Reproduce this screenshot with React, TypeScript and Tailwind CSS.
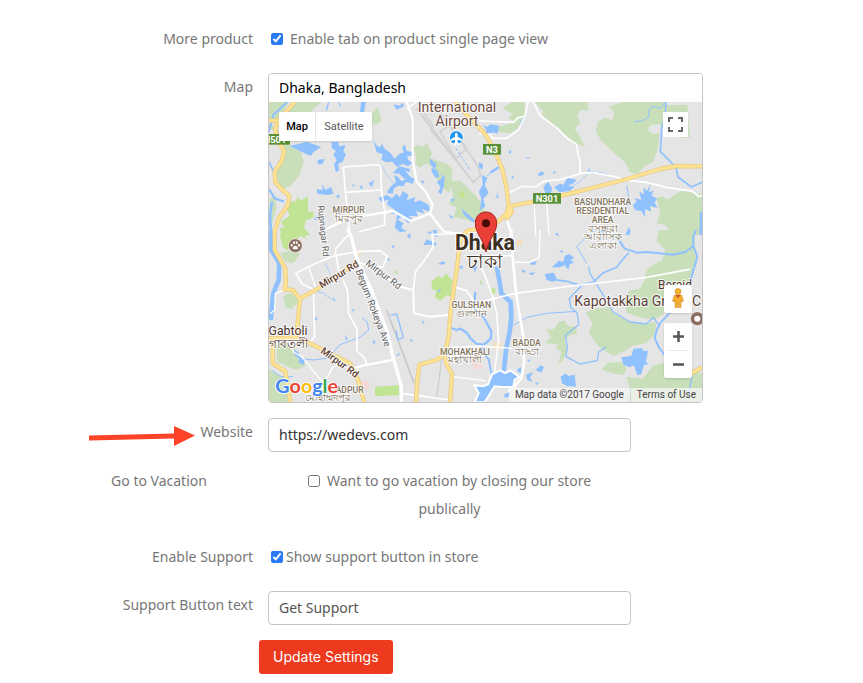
import { useState } from 'react';
import type { ReactNode } from 'react';

type MapLabel = {
  x: number;
  y: number;
  size: number;
  text: string;
  color?: string;
  weight?: number;
  rotate?: number;
  anchor?: 'start' | 'middle' | 'end';
};

const LAND = '#e5e5e5';
const GREEN = '#c9dfba';
const PARK = '#c0e394';
const WATER = '#90c1ff';

// the map is drawn in four tiles on a 3x grid
const TILES = ['translate(0 0)', 'translate(660 0)', 'translate(0 495)', 'translate(660 495)'];

const GREENS = [
  [
    'M27 111H86L58 160L27 168Z',
    'M96 111H186L166 126L150 145H80Z',
    'M27 170L58 200L84 240L124 262L131 290L118 332L92 362L68 372L50 350L48 320L74 280L70 240L52 200L27 190Z',
    'M330 158L350 126L358 140L365 166L348 180L336 172Z',
    'M458 250L474 240L486 246L500 236L516 262L512 280L560 296L578 312L574 340L582 352L566 384L548 366L530 340L518 302L496 296L480 308L466 296L470 276Z',
    'M570 350L602 346L626 372L650 395L664 418L676 440L672 478L640 470L580 456L590 428L566 416L580 392Z',
    'M30 400L44 396L50 428L38 470H27Z',
  ],
  [
    'M60 115L70 126L96 111H132L138 150L122 182L92 205L60 202L46 192L62 184L78 180L102 168L84 160L98 148L76 134Z',
    'M165 111H322L326 138L304 134L292 152L302 176L284 190L300 216L314 244L290 236L250 206L206 166L186 150L190 138Z',
    'M388 124L430 111H556L560 160L548 190L536 176L510 182L502 196L522 208L538 204L534 250L520 290L496 302L472 326L450 322L436 292L400 262L364 228L348 200L352 170L376 158L398 166L402 142Z',
    'M560 120H622L630 216L604 220L584 204L562 210Z',
    'M530 400L548 394L562 404L588 386L604 378L666 386V510H600L572 502L556 480L530 474L540 446Z',
  ],
  [
    'M60 70L110 60L120 72L100 100L76 96Z',
    'M70 200L84 190L100 192L118 214L94 238L76 230Z',
    'M48 348L78 336L104 352L116 388L140 404L110 420L84 410L52 396Z',
    'M27 420L70 440L86 520H27Z',
    'M400 130L408 118L416 132Z',
  ],
  [
    'M536 0H644V56L650 100L630 160L606 208L560 244L522 270L478 262L440 248L434 216L446 182L480 176L494 150L500 118L526 100L546 92L556 60L530 34Z',
    'M318 248L340 236L388 232L400 250L440 270L486 282L530 276L522 316L498 340L456 348L430 366L400 378L372 362L348 340L326 306L338 280Z',
    'M226 292L238 274L254 272L264 288L290 290L290 312L270 316L254 332L262 356L250 390L234 404L244 366L226 352L238 342L196 340L212 320L198 296L216 300Z',
    'M364 418L384 398L424 396L440 414L430 436L396 430Z',
    'M428 520L450 484L440 440L488 446L518 408L552 398L580 410L666 430V520Z',
    'M0 150L8 154L4 166L0 164Z',
  ],
];

const PARKS = [
  [
    'M90 410L108 408L112 396L122 408L144 394L144 440L162 440L160 458L138 466L132 488L150 510H66L58 490L74 488L62 470L90 452L80 432Z',
    'M596 384L610 376L616 394L604 402Z',
  ],
  [],
  [
    'M66 0H140L136 24L118 18L112 36L100 26L84 62L68 50L60 20Z',
    'M516 152L534 138L548 144L558 130L578 152L572 182L582 200L560 196L540 214L524 200L530 182L514 178Z',
    'M345 470L416 466L418 496L345 498Z',
  ],
  ['M30 178L46 174L46 190L30 192Z', 'M-8 -2L20 0L12 6Z'],
];

const PONDS = [
  [
    'M88 242L120 236L140 230L184 246L160 262L152 273L124 260Z',
    'M204 111H208L202 136H197Z',
    'M303 111H318L312 142H300Z',
    'M214 232L234 230L238 244L256 240L250 262L258 266L248 290L234 296L238 316L228 322L222 298L230 286L220 268L228 258L216 250Z',
    'M174 284L194 282L188 296L172 298Z',
    'M170 372L188 376L186 358L196 374L214 366L220 386L202 390L172 386Z',
    'M226 395L236 388L240 400Z',
    'M340 226L352 244L362 246L366 234L372 250L392 264L404 282L416 268L432 262L426 250L434 238L440 258L462 262L460 274L442 272L444 284L458 294L444 304L428 296L412 306L396 290L378 292L364 284L368 268L350 262Z',
    'M418 304L450 312L448 322L434 316L452 336L464 342L458 356L438 350L430 364L416 362L402 370L398 386L380 384L390 366L408 352L402 330L414 336L424 348L436 344L418 326L398 324Z',
    'M356 398L380 390L396 400L408 386L420 396L428 378L446 390L440 406L466 396L462 412L480 406L506 420L510 440L486 432L494 446L468 438L474 454L446 452L462 466L444 474L426 456L408 466L412 448L388 444L404 434L380 418L386 404L362 410Z',
    'M410 462L430 474L424 490L442 498L420 502L404 488Z',
    'M508 280L530 296L524 312L512 300Z',
    'M514 308L532 316L538 336L526 338L516 322Z',
    'M530 352L546 340L544 328L554 336L552 362L544 388L534 382L542 366Z',
    'M326 356L342 344L336 366Z',
    'M298 360L310 366L304 374Z',
    'M276 358L286 360L280 366Z',
    'M484 344L494 350L486 356Z',
    'M566 448L580 456L574 462Z',
    'M160 466L172 450L176 462Z',
    'M604 430L630 452L650 472L636 470L612 450Z',
    'M400 118L420 122L428 112L432 124L410 134Z',
    'M570 404L584 398L580 412Z',
    'M500 504L512 498L516 508Z',
  ],
  [
    'M8 180L22 186L30 178L58 182L52 206L36 202L20 212L10 206L20 196Z',
    'M118 180L128 158L134 160L124 184Z',
    'M6 330L22 338L14 360L26 384L10 402L16 424L0 436L4 400L-4 380L8 360Z',
    'M28 320L54 304L56 312L36 324Z',
    'M190 366L204 350L216 370L212 388L196 384Z',
    'M222 366L240 356L250 360L262 338L290 344L282 354L264 362L284 366L268 378L238 382Z',
    'M172 328L186 318L194 328L180 334Z',
    'M84 262L94 254L92 266Z',
    'M136 278L150 276L144 282Z',
    'M92 338L104 330L98 342Z',
    'M218 322L228 318L224 328Z',
    'M322 318L330 308L328 318L344 320L338 328Z',
    'M458 420L470 410L464 400L484 404L478 380L492 388L490 366L500 378L512 358L506 382L522 376L514 392L532 400L524 412L532 430L510 422L514 440L496 432L494 456L484 438L466 436Z',
    'M438 410L446 394L450 412L442 428Z',
    'M50 380L56 398L50 400Z',
    'M34 450L42 470L32 476L24 462Z',
    'M436 510L446 486L452 498L448 510Z',
    'M660 440H666V510H658Z',
    'M-2 290L10 300L6 314L-4 306Z',
  ],
  [
    'M440 18L452 8L450 26Z',
    'M394 48L406 46L398 56Z',
    'M490 46L500 28L530 40L528 46L500 44Z',
    'M518 0H530L532 22L522 16Z',
    'M534 102L548 94L558 98L546 104Z',
    'M530 184L542 176L540 186Z',
    'M160 258L174 266L166 272Z',
    'M218 200L228 214L220 212Z',
    'M256 316L264 328L256 330Z',
    'M276 236L284 240L278 246Z',
    'M336 336L346 330L344 344Z',
    'M380 90L386 84L392 92Z',
    'M486 270L494 278L488 282Z',
    'M408 376L420 368L416 378Z',
    'M448 332L458 326L456 336Z',
    'M330 208L338 204L340 212Z',
    'M102 360L116 366L124 386L134 390L132 404L116 398L118 386L104 376Z',
    'M596 112L610 106L606 118Z',
    'M634 104L652 110L644 126Z',
  ],
  [
    'M150 98L170 94L166 104L152 104Z',
    'M124 118L138 122L130 130Z',
    'M144 130L166 126L158 136Z',
    'M194 132L222 128L230 146L220 156L200 150Z',
    'M216 112L236 92L250 96L254 78L266 72L282 82L272 92L284 96L268 104L266 120L254 106L240 112Z',
    'M238 66L248 60L250 68Z',
    'M224 12L234 8L236 18Z',
    'M424 382L454 378L460 356L486 354L488 362L504 362L498 394L504 404L492 404L484 432L472 436L462 406L448 412L430 404Z',
    'M112 418L124 410L124 430L114 426Z',
    'M166 420L182 406L192 412L184 428Z',
    'M138 434L160 426L150 444L158 456L142 450Z',
    'M242 440L258 430L264 438L284 434L288 470L262 468L246 460Z',
    'M166 456L176 460L170 466Z',
    'M74 492L90 486L86 502L72 502Z',
    'M142 394L148 386L150 396Z',
    'M356 0L392 0L372 14Z',
  ],
];

const STREAMS: { d: string; w: number }[][] = [
  [
    { d: 'M82 111L40 150L27 200', w: 6 },
    { d: 'M27 290L40 318L50 360', w: 5 },
    { d: 'M27 372L44 400L72 410', w: 7 },
    { d: 'M36 410L30 450L34 510', w: 8 },
    { d: 'M364 300L380 330L404 358', w: 2 },
    { d: 'M236 111L242 126', w: 3 },
  ],
  [
    { d: 'M558 111L556 150L545 190L541 260L562 280L588 308L594 336L634 366L666 352', w: 5 },
    { d: 'M554 111L542 130L520 124L508 132L506 156L486 168L462 170', w: 3 },
    { d: 'M260 374L300 350L326 322L360 322L420 340', w: 2 },
    { d: 'M440 362L446 396', w: 3 },
    { d: 'M22 332L60 304', w: 3 },
  ],
  [
    { d: 'M30 0L34 60L58 100L56 150L40 190L32 270', w: 14 },
    { d: 'M124 386L160 390L204 384L240 344L300 322L326 300L322 276L306 264', w: 3 },
    { d: 'M392 256L410 252L430 322L414 330L408 300', w: 4 },
    { d: 'M196 98L210 130L228 150', w: 2 },
    { d: 'M160 180L190 190L218 210', w: 2 },
    { d: 'M34 420L62 440L100 440', w: 3 },
  ],
  [
    { d: 'M50 110L58 150L64 190L92 216L94 260L90 300L78 360L70 440', w: 14 },
    { d: 'M-86 294L-70 300L-58 296L-40 308L-28 326L-10 342L12 344L32 326L34 304L12 264L-18 234L-14 186', w: 7 },
    { d: 'M4 344L8 366L26 388L34 430', w: 6 },
    { d: 'M378 0L410 20L434 56L470 68L500 66L580 74L616 66L640 48L640 20L648 0', w: 6 },
    { d: 'M640 48L652 80L632 150L614 200L540 280L530 300L524 324L538 354L556 378', w: 6 },
    { d: 'M446 68L424 94L410 112L370 128L340 156L300 166L262 154L200 146', w: 5 },
    { d: 'M320 100L290 50L320 20L350 0', w: 3 },
    { d: 'M326 110L330 130L346 156L372 200L400 246L450 276L500 282L520 262L540 290', w: 4 },
    { d: 'M306 166L268 206L272 232L292 250L296 284L256 316L262 350L258 380L300 402L352 392L356 366L378 350', w: 4 },
    { d: 'M100 286L140 262L200 250L290 244', w: 3 },
    { d: 'M636 440L620 520', w: 4 },
  ],
];

const ROADS: { d: string; w: number }[][] = [
  [
    { d: 'M440 111L458 160L458 286L470 350L500 384L518 420L510 446L452 468L400 438L300 454L262 462L190 496', w: 7 },
    { d: 'M270 510L262 440L256 380L250 306L352 299L362 304L364 374L374 440V480L300 500', w: 5 },
    { d: 'M256 382L364 375', w: 5 },
    { d: 'M510 446L552 500L590 506L660 500', w: 7 },
    { d: 'M440 130L470 111', w: 4 },
  ],
  [
    { d: 'M0 168L100 172L114 158L134 154L144 111', w: 5 },
    { d: 'M0 206L30 208L36 220L80 220L116 194L132 160', w: 5 },
    { d: 'M160 111L180 152L232 190L262 220L290 238L294 270L300 290V325', w: 5 },
    { d: 'M80 386L128 364L166 366L194 348L240 344L304 325L338 322L400 334L444 346L500 352L562 368L636 378L656 394L666 392', w: 5 },
    { d: 'M163 418L167 510', w: 4 },
    { d: 'M200 412L207 510', w: 4 },
    { d: 'M80 450L84 476L92 500V520', w: 8 },
  ],
  [
    { d: 'M264 0L274 20L288 76L298 104L330 170L380 300L400 384L424 470L424 520', w: 10 },
    { d: 'M298 98L330 108L420 170L460 180L462 250L510 260L565 255', w: 6 },
    { d: 'M460 180L466 126L494 90L520 50L516 14L560 12L600 10', w: 5 },
    { d: 'M225 80L228 54L258 22L268 16', w: 5 },
    { d: 'M108 130L150 108L226 76L300 64L360 62L382 78L368 112L326 104', w: 5 },
    { d: 'M108 130L126 162L160 178L164 320L148 338', w: 5 },
    { d: 'M146 110L166 170', w: 4 },
    { d: 'M228 76L236 120L262 180L266 250L292 300L290 362L314 384L320 404', w: 5 },
    { d: 'M276 418L310 406L400 390', w: 7 },
    { d: 'M90 340L100 366L126 380L142 400L190 460L220 410L262 400', w: 4 },
    { d: 'M75 180L46 190L44 240L32 250', w: 4 },
    { d: 'M588 172L620 182L638 208L640 250', w: 5 },
    { d: 'M424 490L570 510', w: 5 },
    { d: 'M575 440L676 452', w: 4 },
    { d: 'M190 460L180 500L190 520', w: 4 },
  ],
  [
    { d: 'M0 216L105 190L300 165L500 142L628 118', w: 5 },
    { d: 'M94 0L98 80L108 190L130 320L132 400L124 446L88 484', w: 8 },
    { d: 'M98 96L146 98L178 82L180 0', w: 4 },
    { d: 'M0 100L22 156L38 200L50 250L56 330L44 424', w: 5 },
    { d: 'M18 84L60 78L98 76', w: 5 },
    { d: 'M-100 352L0 348L96 355', w: 4 },
    { d: 'M96 520L110 460', w: 4 },
  ],
];

const HIGHWAYS: string[][] = [
  [
    'M104 111L84 134L58 162L46 190L52 224L72 258L66 286L44 320L46 352L68 376L88 392L84 420L56 460L44 500',
    'M27 166L52 168',
    'M585 111L630 160L676 208L704 258L726 310L740 370L746 424L740 446L716 468L676 490L624 496L606 512L598 540',
  ],
  ['M88 424L160 410L260 388L430 345L540 312L590 303L666 304', 'M88 424L96 440L80 460L94 420'],
  [
    'M44 0L44 60L76 116L78 160L74 178L98 180L120 206L180 172L290 98',
    'M120 206L112 290L106 322',
    'M27 326L106 322L150 340L270 400L292 444L314 520',
    'M38 330V400L76 424L92 520',
    'M600 36L590 120L572 240L566 320L554 372L530 390L478 404L472 450L468 520',
    'M554 372L560 404L576 432L570 520',
  ],
  ['M630 432L666 412'],
];

const LABELS: MapLabel[] = [
  { x: 591, y: 140, size: 42, text: 'International', color: '#6d4c41' },
  { x: 591, y: 184, size: 42, text: 'Airport', color: '#6d4c41' },
  { x: 266, y: 443, size: 26, text: 'MIRPUR', weight: 500 },
  { x: 266, y: 470, size: 30, text: 'মিরপুর' },
  { x: 1028, y: 419, size: 26, text: 'BASUNDHARA', weight: 500 },
  { x: 1028, y: 446, size: 26, text: 'RESIDENTIAL', weight: 500 },
  { x: 1028, y: 474, size: 26, text: 'AREA', weight: 500 },
  { x: 1028, y: 500, size: 30, text: 'বসুন্ধরা' },
  { x: 1028, y: 526, size: 30, text: 'আবাসিক' },
  { x: 1028, y: 553, size: 30, text: 'এলাকা' },
  { x: 84, y: 809, size: 37, text: 'Gabtoli', color: '#4e342e' },
  { x: 84, y: 848, size: 37, text: 'গাবতলী', color: '#4e342e' },
  { x: 634, y: 730, size: 26, text: 'GULSHAN', weight: 500 },
  { x: 634, y: 756, size: 30, text: 'গুলশান' },
  { x: 615, y: 870, size: 26, text: 'MOHAKHALI', weight: 500 },
  { x: 615, y: 895, size: 30, text: 'মহাখালী' },
  { x: 800, y: 843, size: 26, text: 'BADDA', weight: 500 },
  { x: 800, y: 870, size: 30, text: 'বাড্ডা' },
  { x: 311, y: 983, size: 26, text: 'ADPUR', weight: 500, anchor: 'end' },
  { x: 203, y: 1009, size: 30, text: 'মোহাম্মদপুর' },
  { x: 1245, y: 673, size: 36, text: 'Beraid', color: '#4e342e' },
  { x: 943, y: 724, size: 42, text: 'Kapotakkha Green City', color: '#5d4037', anchor: 'start' },
  { x: 238, y: 638, size: 30, text: 'Mirpur Rd', color: '#5d4037', weight: 500, rotate: -31 },
  { x: 370, y: 638, size: 29, text: 'Mirpur Rd', color: '#616161', rotate: 37 },
  { x: 238, y: 902, size: 30, text: 'Mirpur Rd', color: '#5d4037', weight: 500, rotate: 36 },
  { x: 338, y: 737, size: 29, text: 'Begum Rokeya Ave', color: '#616161', rotate: 69 },
  { x: 189, y: 506, size: 27, text: 'Rupnagar Rd', color: '#616161', rotate: 84 },
];

const SHIELDS = [
  { x: 0, y: 207, w: 90, h: 32, text: 'N501' },
  { x: 669, y: 237, w: 54, h: 32, text: 'N3' },
  { x: 819, y: 384, w: 84, h: 32, text: 'N301' },
];

const LOGO = [
  ['G', '#4285f4'],
  ['o', '#ea4335'],
  ['o', '#fbbc05'],
  ['g', '#4285f4'],
  ['l', '#34a853'],
  ['e', '#ea4335'],
];

function CityMap() {
  return (
    <svg
      viewBox="27 111 1299 900"
      preserveAspectRatio="xMidYMid slice"
      className="block h-[300px] w-full"
      role="img"
      aria-label="Map of Dhaka"
      fontFamily='Roboto, "Noto Sans", sans-serif'
    >
      <rect x="27" y="111" width="1299" height="900" fill={LAND} />
      {TILES.map((t, i) => (
        <g key={t} transform={t}>
          {GREENS[i].map((d) => (
            <path key={d} d={d} fill={GREEN} />
          ))}
          {PARKS[i].map((d) => (
            <path key={d} d={d} fill={PARK} />
          ))}
        </g>
      ))}

      {/* airport runways */}
      <g fill="none" stroke="#d2d2d2" strokeLinejoin="round">
        <path d="M470 130L640 352L662 330L652 300L540 142L510 134" strokeWidth="6" />
        <path d="M490 142L520 184L512 194L600 300" strokeWidth="5" />
        <path d="M540 200L570 180L620 250L588 280Z" strokeWidth="5" />
        <path d="M588 250L632 318" strokeWidth="4" stroke="#a9cbf5" strokeDasharray="8 5" />
        <path d="M380 735L462 955" strokeWidth="5" stroke="#c8c8c8" />
        <path d="M545 880L530 1000" strokeWidth="3" stroke="#c8c8c8" />
      </g>
      <g fill="#f3dfc0">
        <path d="M288 560h16v10h-16zM700 832h24v20h-24zM770 524h16v18h-16z" />
        <path d="M300 952l24-6 6 22-20 10z" fill="#f5d9d9" />
        <path d="M634 888l30-6 4 26-24 8z" fill="#f5d9d9" />
      </g>

      {TILES.map((t, i) => (
        <g key={t} transform={t} strokeLinejoin="round">
          {PONDS[i].map((d) => (
            <path key={d} d={d} fill={WATER} />
          ))}
          {STREAMS[i].map((s) => (
            <path key={s.d} d={s.d} fill="none" stroke={WATER} strokeWidth={s.w} />
          ))}
        </g>
      ))}
      {/* lake south of Gulshan */}
      <path
        d="M642 960L668 964L684 958L696 928L720 916L736 924L752 916L778 936L764 944L760 966L724 966L704 964L690 986L674 1012H644L656 984Z"
        fill={WATER}
        stroke="#fff"
        strokeWidth="6"
        strokeLinejoin="round"
      />
      {TILES.map((t, i) => (
        <g key={t} transform={t} fill="none" stroke="#fff" strokeLinejoin="round" strokeLinecap="round">
          {ROADS[i].map((r) => (
            <path key={r.d} d={r.d} strokeWidth={r.w} />
          ))}
        </g>
      ))}
      {[
        { color: '#e6c67e', width: 13 },
        { color: '#fde293', width: 9 },
      ].map((layer) => (
        <g key={layer.color} fill="none" stroke={layer.color} strokeWidth={layer.width} strokeLinejoin="round">
          {TILES.map((t, i) => (
            <g key={t} transform={t}>
              {HIGHWAYS[i].map((d) => (
                <path key={d} d={d} />
              ))}
            </g>
          ))}
        </g>
      ))}

      {SHIELDS.map((s) => (
        <g key={s.text}>
          <rect x={s.x} y={s.y} width={s.w} height={s.h} fill="#5b9138" />
          <text x={s.x + s.w / 2} y={s.y + 26} fontSize="28" fontWeight="700" fill="#fff" textAnchor="middle">
            {s.text}
          </text>
        </g>
      ))}

      {LABELS.map((l, i) => (
        <text
          key={i}
          x={l.x}
          y={l.y}
          fontSize={l.size}
          fontWeight={l.weight ?? 400}
          fill={l.color ?? '#83745c'}
          stroke="#fff"
          strokeOpacity="0.8"
          strokeWidth="6"
          strokeLinejoin="round"
          paintOrder="stroke"
          textAnchor={l.anchor ?? 'middle'}
          transform={l.rotate ? `rotate(${l.rotate} ${l.x} ${l.y - 8})` : undefined}
        >
          {l.text}
        </text>
      ))}
      <g fill="#3e2f23" stroke="#fff" strokeOpacity="0.8" strokeWidth="7" paintOrder="stroke" textAnchor="middle">
        <text x="675" y="554" fontSize="64" fontWeight="700">
          Dhaka
        </text>
        <text x="675" y="610" fontSize="56">
          ঢাকা
        </text>
      </g>

      {/* airport */}
      <circle cx="589" cy="218" r="21" fill="#2196f3" stroke="#fff" strokeWidth="3" />
      <path
        d="M589 203c-3 0-4 4-4 7v5l-13 8v5l13-4v8l-5 4v3l9-2 9 2v-3l-5-4v-8l13 4v-5l-13-8v-5c0-3-1-7-4-7z"
        fill="#fff"
      />
      {/* zoo */}
      <circle cx="106" cy="542" r="21" fill="#8d6e63" stroke="#fff" strokeWidth="2" />
      <g fill="#fff">
        <ellipse cx="95" cy="541" rx="3" ry="4" />
        <ellipse cx="102" cy="533" rx="3" ry="4" />
        <ellipse cx="110" cy="533" rx="3" ry="4" />
        <ellipse cx="117" cy="541" rx="3" ry="4" />
        <path d="M106 542c-4 0-8 5-8 8 0 4 5 3 8 3 3 0 8 1 8-3 0-3-4-8-8-8z" />
      </g>
      <circle cx="1312" cy="761" r="21" fill="#8d6e63" stroke="#fff" strokeWidth="2" />
      <circle cx="1312" cy="761" r="9" fill="#fff" />

      {/* marker */}
      <path
        d="M678 561C673 526 646 506 646 475C646 455 660 441 678 441C696 441 710 455 710 475C710 506 683 526 678 561Z"
        fill="#ea4038"
        stroke="#a52620"
        strokeWidth="3"
      />
      <circle cx="678" cy="475" r="12" fill="#4a0b08" />

      <text
        x="46"
        y="984"
        fontFamily='Lato, "Open Sans", sans-serif'
        fontSize="59"
        fontWeight="700"
        stroke="#fff"
        strokeWidth="5"
        paintOrder="stroke"
      >
        {LOGO.map(([letter, color], i) => (
          <tspan key={i} fill={color}>
            {letter}
          </tspan>
        ))}
      </text>
    </svg>
  );
}

function MapControls() {
  return (
    <>
      <div className="absolute top-[10px] left-[10px] flex h-[29px] rounded-xs bg-white text-[11px] shadow">
        <button type="button" className="w-[37px] border-r border-gray-200 font-medium text-black">
          Map
        </button>
        <button type="button" className="w-14 text-[#565656]">
          Satellite
        </button>
      </div>
      <button
        type="button"
        aria-label="Toggle fullscreen"
        className="absolute top-[10px] right-[14px] flex h-[25px] w-[25px] items-center justify-center bg-white"
      >
        <svg viewBox="0 0 15 15" className="h-[15px] w-[15px]" fill="none" stroke="#666" strokeWidth="2">
          <path d="M1 5V1H5M10 1H14V5M14 10V14H10M5 14H1V10" />
        </svg>
      </button>
      <button
        type="button"
        aria-label="Street view"
        className="absolute right-[10px] bottom-[89px] flex h-7 w-7 items-center justify-center rounded-xs bg-white pb-[3px] shadow"
      >
        <svg viewBox="0 0 28 42" className="h-[21px] w-[14px]" fill="#f6b02c" stroke="#c77f16">
          <path d="M7 16H21L25 28L22 30L20 26V41H15V31H13V41H8V26L6 30L3 28Z" />
          <circle cx="14" cy="9" r="6" />
          <path d="M9 16L14 23L19 16Z" fill="#d0562b" stroke="none" />
        </svg>
      </button>
      <div className="absolute right-[10px] bottom-6 flex w-7 flex-col items-center rounded-xs bg-white shadow">
        <button type="button" aria-label="Zoom in" className="flex h-[27px] w-7 items-center justify-center">
          <svg viewBox="0 0 22 22" className="h-[11px] w-[11px]" stroke="#555" strokeWidth="5">
            <path d="M0 11H22M11 0V22" />
          </svg>
        </button>
        <span className="h-px w-[18px] bg-gray-200" />
        <button type="button" aria-label="Zoom out" className="flex h-[27px] w-7 items-center justify-center">
          <svg viewBox="0 0 22 22" className="h-[11px] w-[11px]" stroke="#555" strokeWidth="5">
            <path d="M0 11H22" />
          </svg>
        </button>
      </div>
      <div className="absolute right-0 bottom-0 flex h-[14px] items-center bg-[#f5f5f5]/75 text-[10px] text-[#444]">
        <span className="px-[6px]">Map data ©2017 Google</span>
        <a href="#terms" className="border-l border-gray-300 px-[6px]">
          Terms of Use
        </a>
      </div>
    </>
  );
}

type RowProps = {
  label: ReactNode;
  htmlFor: string;
  center?: boolean;
  className: string;
  children: ReactNode;
};

function Row({ label, htmlFor, center, className, children }: RowProps) {
  return (
    <div className={`flex gap-[15px] ${className}`}>
      <label
        htmlFor={htmlFor}
        className={`flex w-[188px] shrink-0 gap-[5px] ${center ? 'justify-center' : 'justify-end'}`}
      >
        {label}
      </label>
      <div className="min-w-0 flex-1">{children}</div>
    </div>
  );
}

const inputClass =
  'block h-[34px] w-full max-w-[363px] rounded border border-[#c4c4c4] bg-white px-[10px] pb-[2px] outline-none';
const checkClass = 'h-3 w-3 shrink-0 accent-[#2a7af5]';

export default function App() {
  const [moreProduct, setMoreProduct] = useState(true);
  const [address, setAddress] = useState('Dhaka, Bangladesh');
  const [website, setWebsite] = useState('https://wedevs.com');
  const [vacation, setVacation] = useState(false);
  const [support, setSupport] = useState(true);
  const [supportText, setSupportText] = useState('Get Support');

  return (
    <form
      onSubmit={(e) => e.preventDefault()}
      className="min-h-screen bg-white px-[65px] pt-[25px] pb-2 font-['Noto_Sans','Open_Sans',sans-serif] text-[14px] leading-7 text-[#777]"
    >
      <Row label="More product" htmlFor="more-product" className="mb-5">
        <label className="flex items-center gap-[7px] pl-[3px]">
          <input
            id="more-product"
            type="checkbox"
            checked={moreProduct}
            onChange={(e) => setMoreProduct(e.target.checked)}
            className={checkClass}
          />
          Enable tab on product single page view
        </label>
      </Row>

      <Row label="Map" htmlFor="address" className="mb-[15px]">
        <div className="max-w-[435px] overflow-hidden rounded border border-[#c4c4c4]">
          <input
            id="address"
            type="text"
            value={address}
            onChange={(e) => setAddress(e.target.value)}
            className="block h-7 w-full bg-white px-[10px] text-black outline-none"
          />
          <div className="relative font-[Roboto,sans-serif]">
            <CityMap />
            <MapControls />
          </div>
        </div>
      </Row>

      <Row
        label={
          <>
            <svg viewBox="0 0 107 28" className="h-7 w-[107px]" fill="#fd4328">
              <path d="M1 17.500L86 15.500V8L107 17.500L86 28V20.500L1 22.500Z" />
            </svg>
            Website
          </>
        }
        htmlFor="website"
        className="mb-[15px]"
      >
        <input
          id="website"
          type="text"
          value={website}
          onChange={(e) => setWebsite(e.target.value)}
          className={`${inputClass} text-[#333]`}
        />
      </Row>

      <Row label="Go to Vacation" htmlFor="vacation" center className="mb-5">
        <label className="block max-w-[363px] px-6 text-center">
          <input
            id="vacation"
            type="checkbox"
            checked={vacation}
            onChange={(e) => setVacation(e.target.checked)}
            className={`${checkClass} mr-[7px] align-[-1px]`}
          />
          Want to go vacation by closing our store publically
        </label>
      </Row>

      <Row label="Enable Support" htmlFor="support" className="mb-5">
        <label className="flex items-center gap-[3px] pl-[3px]">
          <input
            id="support"
            type="checkbox"
            checked={support}
            onChange={(e) => setSupport(e.target.checked)}
            className={checkClass}
          />
          Show support button in store
        </label>
      </Row>

      <Row label="Support Button text" htmlFor="support-text" className="mb-[15px]">
        <input
          id="support-text"
          type="text"
          value={supportText}
          onChange={(e) => setSupportText(e.target.value)}
          className={`${inputClass} text-[#555]`}
        />
      </Row>

      <button
        type="submit"
        className="ml-[194px] block h-[34px] rounded-[3px] bg-[#ed391d] px-[14px] font-['Inter',sans-serif] text-[14px] text-white"
      >
        Update Settings
      </button>
    </form>
  );
}
